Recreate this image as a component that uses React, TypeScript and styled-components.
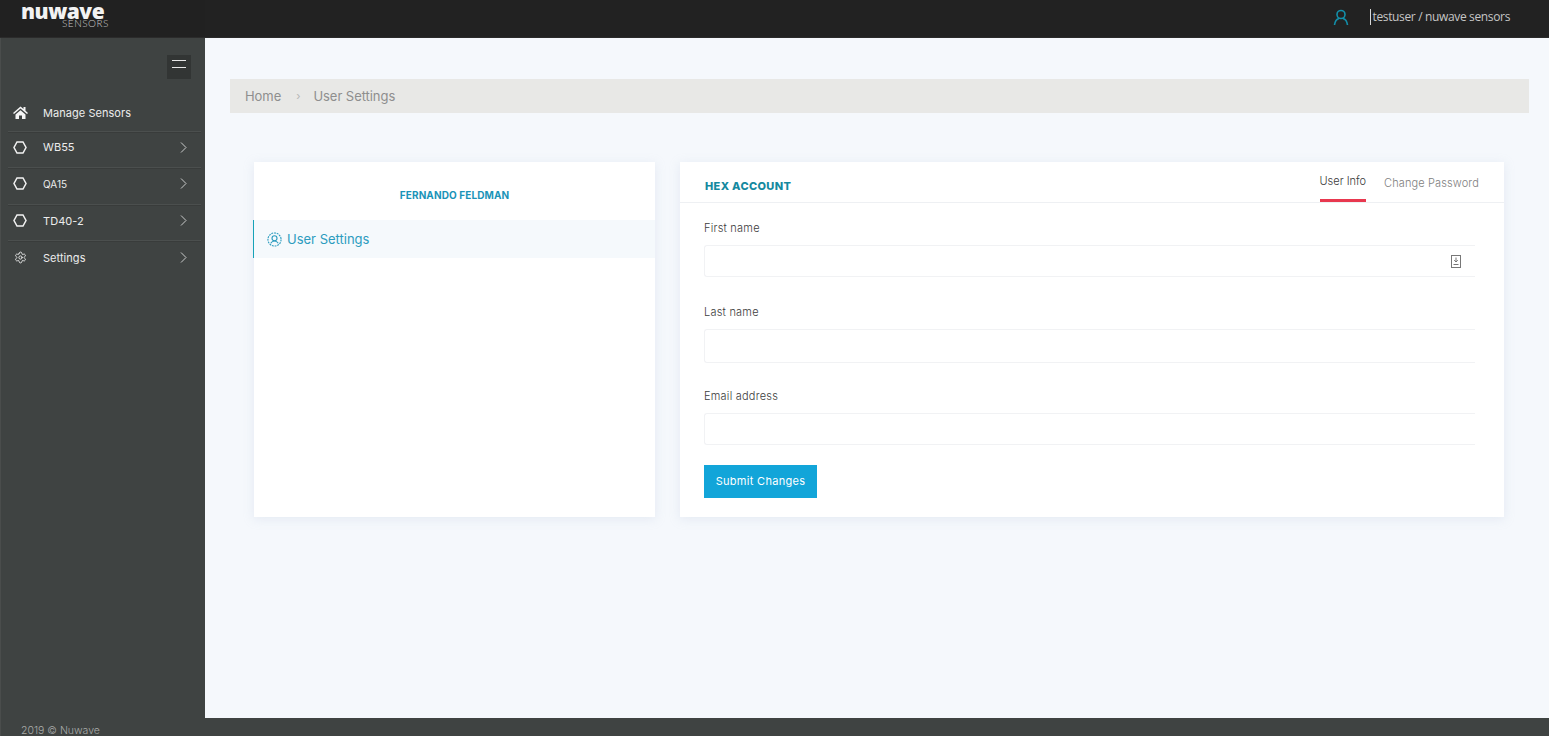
import React from "react";
import styled, { createGlobalStyle } from "styled-components";
import { Settings } from "lucide-react";

const Global = createGlobalStyle`
  html, body { margin: 0; padding: 0; height: 100%; overflow: hidden; }
  body { font-family: Inter, "Liberation Sans", sans-serif; background: #f5f8fc; }
  * { box-sizing: border-box; }
`;

const Page = styled.div`
  width: 1549px;
  height: 736px;
  display: flex;
  flex-direction: column;
  overflow: hidden;
`;

const TopBar = styled.header`
  height: 38px;
  flex: none;
  background: #222222;
  display: flex;
  align-items: center;
  border-bottom: 1px solid #2b2b2b;
`;

const Brand = styled.div`
  width: 205px;
  height: 100%;
  padding: 3px 0 0 21px;
  background: #212121;
`;

const BrandName = styled.div`
  font-family: "Open Sans", sans-serif;
  font-weight: 800;
  font-size: 21px;
  line-height: 16px;
  letter-spacing: -0.5px;
  color: #f2f2f2;
`;

const BrandSub = styled.div`
  font-family: Lato, sans-serif;
  font-weight: 300;
  font-size: 10px;
  line-height: 9px;
  letter-spacing: 0.5px;
  color: #c9c9c9;
  margin-left: 41px;
`;

const UserArea = styled.div`
  margin-left: auto;
  margin-bottom: 3px;
  display: flex;
  align-items: center;
  padding-right: 39px;
`;

const UserName = styled.span`
  font-family: "Open Sans", sans-serif;
  font-size: 12px;
  letter-spacing: -0.35px;
  color: #c6c6c6;
  margin-left: 21px;
  padding-left: 1px;
  border-left: 1px solid #d8d8d8;
  line-height: 16px;
`;

const Body = styled.div`
  flex: 1;
  display: flex;
  min-height: 0;
`;

const Sidebar = styled.aside`
  width: 205px;
  flex: none;
  background: #3f4342;
  border-left: 1px solid #4a4d4c;
  display: flex;
  flex-direction: column;
  position: relative;
  overflow: hidden;
`;

const MenuToggle = styled.button`
  width: 24px;
  height: 24px;
  margin: 17px 0 0 166px;
  padding: 5px 0 0;
  border: 0;
  background: #323534;
  display: flex;
  flex-direction: column;
  align-items: center;
  justify-content: flex-start;
  gap: 6px;
`;

const ToggleLine = styled.span`
  width: 14px;
  height: 1px;
  background: #e8e8e8;
`;

const Menu = styled.nav`
  margin-top: 16px;
  padding: 0 4px 0 7px;
`;

const MenuRow = styled.div<{ $divided?: boolean; $lifted?: boolean }>`
  height: 36.6px;
  display: flex;
  align-items: center;
  padding-left: 4px;
  padding-bottom: ${(p) => (p.$lifted ? 4 : 0)}px;
  border-bottom: ${(p) => (p.$divided ? "1px solid #4b4f4e" : "0")};
  box-shadow: ${(p) => (p.$divided ? "0 1px 0 #393c3b" : "none")};
  color: #f1f1f1;
`;

const MenuIcon = styled.span`
  width: 16px;
  height: 16px;
  display: flex;
  align-items: center;
  justify-content: center;
  margin-right: 15px;
`;

const MenuLabel = styled.span<{ $size?: number }>`
  font-size: ${(p) => p.$size ?? 11}px;
  letter-spacing: 0.05px;
  color: #ececec;
`;

const Chevron = styled.span`
  margin-left: auto;
  margin-right: 14px;
  display: flex;
`;

const Copyright = styled.div`
  position: absolute;
  left: 20px;
  bottom: 0;
  font-size: 10.5px;
  font-weight: 300;
  color: #a9aba9;
  line-height: 10px;
`;

const Column = styled.div`
  flex: 1;
  min-width: 0;
  display: flex;
  flex-direction: column;
`;

const Main = styled.main`
  flex: 1;
  background: #f5f8fc;
  padding: 41px 20px 0 25px;
`;

const FooterBar = styled.div`
  height: 18px;
  flex: none;
  background: #3f4342;
`;

const Breadcrumb = styled.div`
  height: 34px;
  background: #e8e8e6;
  display: flex;
  align-items: center;
  padding-left: 15px;
  font-size: 13px;
  letter-spacing: -0.05px;
  color: #8e8e8e;
`;

const Crumb = styled.span``;

const CrumbSep = styled.span`
  margin: 0 13px 0 15px;
  color: #b5b5b5;
  font-size: 11px;
`;

const Cards = styled.div`
  display: flex;
  gap: 25px;
  margin: 49px 25px 0 24px;
`;

const Card = styled.section<{ $width?: number }>`
  background: #ffffff;
  height: 355px;
  box-shadow: 0 2px 10px rgba(180, 190, 215, 0.25);
  ${(p) => (p.$width ? `width: ${p.$width}px; flex: none;` : "flex: 1;")}
`;

const ProfileName = styled.div`
  padding-top: 26px;
  height: 58px;
  text-align: center;
  font-size: 10px;
  font-weight: 700;
  letter-spacing: 0.1px;
  color: #1a93b8;
  line-height: 14px;
`;

const ProfileLink = styled.div`
  height: 38px;
  margin-left: -1px;
  background: #f5f9fc;
  border-left: 1px solid #16a3b8;
  display: flex;
  align-items: center;
  padding-left: 13px;
  gap: 5px;
  font-size: 13px;
  color: #2c9cbf;
`;

const CardHeader = styled.div`
  height: 41px;
  border-bottom: 1px solid #eef0f3;
  padding: 0 25px;
  display: flex;
`;

const CardTitle = styled.h2`
  margin: 17px 0 0;
  font-size: 11px;
  line-height: 14px;
  font-weight: 800;
  letter-spacing: 0.35px;
  color: #15899f;
`;

const Tabs = styled.div`
  margin-left: auto;
  display: flex;
  gap: 18px;
`;

const Tab = styled.div<{ $active?: boolean }>`
  height: 40px;
  font-size: 11px;
  font-weight: 300;
  line-height: 14px;
  letter-spacing: ${(p) => (p.$active ? 0 : 0.12)}px;
  padding-top: ${(p) => (p.$active ? 12 : 14)}px;
  color: ${(p) => (p.$active ? "#3a3a3a" : "#808080")};
  border-bottom: ${(p) => (p.$active ? "3px solid #e8384f" : "0")};
`;

const Form = styled.form`
  padding: 18px 29px 0 24px;
`;

const Label = styled.label`
  display: block;
  font-size: 11px;
  line-height: 14px;
  font-weight: 300;
  color: #3c3c3c;
  letter-spacing: 0.22px;
`;

const Field = styled.div<{ $tall?: boolean }>`
  height: ${(p) => (p.$tall ? 34 : 32)}px;
  margin-top: 10px;
  margin-bottom: ${(p) => (p.$tall ? 26 : 28)}px;
  border: 1px solid #f1f2f4;
  border-right: 0;
  border-radius: 3px 0 0 3px;
  display: flex;
  align-items: center;
  justify-content: flex-end;
  padding-right: 14px;
`;

const SubmitButton = styled.button`
  width: 113px;
  height: 33px;
  border: 0;
  margin-top: -8px;
  background: #12a5d9;
  color: #ffffff;
  font-family: inherit;
  font-size: 11px;
  letter-spacing: 0.3px;
  padding: 0 0 1px;
  display: block;
`;

const Hexagon = () => (
  <svg width="14" height="13" viewBox="0 0 14 13" fill="none" stroke="#f2f2f2" strokeWidth="1.5">
    <path d="M4 1h6l3 5.5-3 5.5H4L1 6.5z" />
  </svg>
);

const UserGear = () => (
  <svg width="15" height="15" viewBox="0 0 24 24" fill="none" stroke="#2c9cbf" strokeWidth="1.8">
    <circle cx="12" cy="12" r="10.5" strokeDasharray="3 1.4" />
    <circle cx="12" cy="10" r="4" />
    <path d="M6 18c1.5-2.6 3.5-3.6 6-3.6s4.5 1 6 3.6" />
  </svg>
);

const ChevronIcon = () => (
  <svg width="7" height="11" viewBox="0 0 7 11" fill="none" stroke="#c9cbca" strokeWidth="1">
    <path d="M1 .5l5 5-5 5" />
  </svg>
);

const Home = () => (
  <svg width="15" height="13" viewBox="0 0 15 13" fill="#f5f5f5">
    <path d="M7.5 0.5L0 7l1 1 6.5-5.5L14 8l1-1-2.5-2.2V1h-2v2L7.5.5zM2.5 8.5V13h3.5V9.5h3V13h3.5V8.5l-5-4.2z" />
  </svg>
);

const UserIcon = () => (
  <svg width="16" height="17" viewBox="0 0 16 17" fill="none" stroke="#1390ab" strokeWidth="1.6">
    <circle cx="8" cy="5.5" r="4" />
    <path d="M1.5 16c.5-3.5 2.5-6 4.5-6.5M14.5 16c-.5-3.5-2.5-6-4.5-6.5" />
  </svg>
);

const KeyIcon = () => (
  <svg width="10" height="13" viewBox="0 0 10 13" fill="none" stroke="#777777" strokeWidth="1">
    <rect x="0.5" y="0.5" width="9" height="12" />
    <path d="M5 2.5v4.5M3.2 5.2L5 7l1.8-1.8M2.5 9.5h5" />
  </svg>
);

const items = [
  { label: "WB55", icon: <Hexagon />, size: 11 },
  { label: "QA15", icon: <Hexagon />, size: 10 },
  { label: "TD40-2", icon: <Hexagon />, size: 11 },
  { label: "Settings", icon: <Settings size={13} color="#f2f2f2" strokeWidth={1.6} />, size: 11 },
];

export default function App() {
  return (
    <Page>
      <Global />
      <TopBar>
        <Brand>
          <BrandName>nuwave</BrandName>
          <BrandSub>SENSORS</BrandSub>
        </Brand>
        <UserArea>
          <UserIcon />
          <UserName>testuser / nuwave sensors</UserName>
        </UserArea>
      </TopBar>
      <Body>
        <Sidebar>
          <MenuToggle aria-label="Toggle menu">
            <ToggleLine />
            <ToggleLine />
          </MenuToggle>
          <Menu>
            <MenuRow $divided>
              <MenuIcon><Home /></MenuIcon>
              <MenuLabel>Manage Sensors</MenuLabel>
            </MenuRow>
            {items.map((item, i) => (
              <MenuRow key={item.label} $lifted $divided={i < items.length - 1}>
                <MenuIcon>{item.icon}</MenuIcon>
                <MenuLabel $size={item.size}>{item.label}</MenuLabel>
                <Chevron><ChevronIcon /></Chevron>
              </MenuRow>
            ))}
          </Menu>
          <Copyright>2019 © Nuwave</Copyright>
        </Sidebar>
        <Column>
          <Main>
            <Breadcrumb>
              <Crumb>Home</Crumb>
              <CrumbSep>›</CrumbSep>
              <Crumb>User Settings</Crumb>
            </Breadcrumb>
            <Cards>
              <Card $width={401}>
                <ProfileName>FERNANDO FELDMAN</ProfileName>
                <ProfileLink>
                  <UserGear />
                  User Settings
                </ProfileLink>
              </Card>
              <Card>
                <CardHeader>
                  <CardTitle>HEX ACCOUNT</CardTitle>
                  <Tabs>
                    <Tab $active>User Info</Tab>
                    <Tab>Change Password</Tab>
                  </Tabs>
                </CardHeader>
                <Form>
                  <Label>First name</Label>
                  <Field><KeyIcon /></Field>
                  <Label>Last name</Label>
                  <Field $tall />
                  <Label>Email address</Label>
                  <Field />
                  <SubmitButton type="button">Submit Changes</SubmitButton>
                </Form>
              </Card>
            </Cards>
          </Main>
          <FooterBar />
        </Column>
      </Body>
    </Page>
  );
}
